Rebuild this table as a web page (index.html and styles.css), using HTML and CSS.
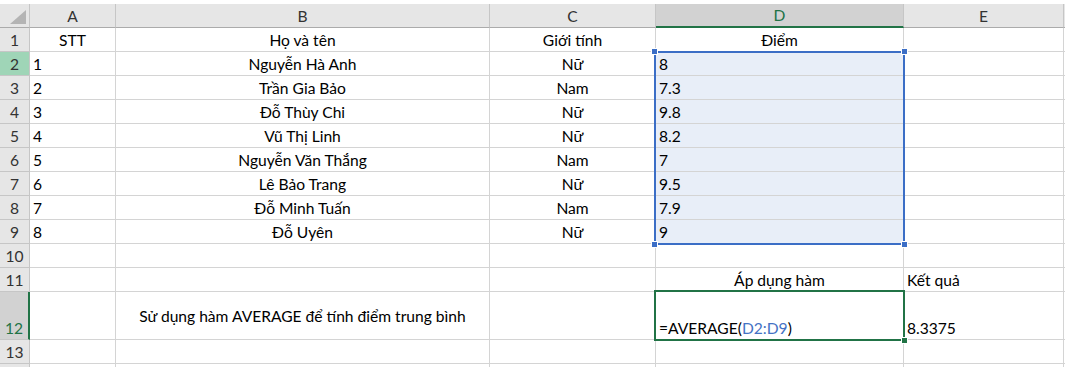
FILE: index.html
```html
<!DOCTYPE html>
<html lang="vi">
<head>
    <meta charset="UTF-8">
    <title>Bảng điểm</title>
    <link rel="stylesheet" href="styles.css">
</head>
<body>
    <div class="sheet">
        <div class="grid">
            <!-- Column headers -->
            <div class="corner">
                <svg width="16" height="14" viewBox="0 0 16 14"><polygon points="16,0 16,14 0,14" fill="#b4b4b4"/></svg>
            </div>
            <div class="col-head">A</div>
            <div class="col-head">B</div>
            <div class="col-head">C</div>
            <div class="col-head active">D</div>
            <div class="col-head">E</div>
            <div class="col-head"></div>

            <!-- Row 1 -->
            <div class="row-head">1</div>
            <div class="cell center">STT</div>
            <div class="cell center">Họ và tên</div>
            <div class="cell center">Giới tính</div>
            <div class="cell center">Điểm</div>
            <div class="cell"></div>
            <div class="cell"></div>

            <div class="row-head picked">2</div>
            <div class="cell">1</div>
            <div class="cell center">Nguyễn Hà Anh</div>
            <div class="cell center">Nữ</div>
            <div class="cell sel">8</div>
            <div class="cell"></div>
            <div class="cell"></div>

            <div class="row-head">3</div>
            <div class="cell">2</div>
            <div class="cell center">Trần Gia Bảo</div>
            <div class="cell center">Nam</div>
            <div class="cell sel">7.3</div>
            <div class="cell"></div>
            <div class="cell"></div>

            <div class="row-head">4</div>
            <div class="cell">3</div>
            <div class="cell center">Đỗ Thùy Chi</div>
            <div class="cell center">Nữ</div>
            <div class="cell sel">9.8</div>
            <div class="cell"></div>
            <div class="cell"></div>

            <div class="row-head">5</div>
            <div class="cell">4</div>
            <div class="cell center">Vũ Thị Linh</div>
            <div class="cell center">Nữ</div>
            <div class="cell sel">8.2</div>
            <div class="cell"></div>
            <div class="cell"></div>

            <div class="row-head">6</div>
            <div class="cell">5</div>
            <div class="cell center">Nguyễn Văn Thắng</div>
            <div class="cell center">Nam</div>
            <div class="cell sel">7</div>
            <div class="cell"></div>
            <div class="cell"></div>

            <div class="row-head">7</div>
            <div class="cell">6</div>
            <div class="cell center">Lê Bảo Trang</div>
            <div class="cell center">Nữ</div>
            <div class="cell sel">9.5</div>
            <div class="cell"></div>
            <div class="cell"></div>

            <div class="row-head">8</div>
            <div class="cell">7</div>
            <div class="cell center">Đỗ Minh Tuấn</div>
            <div class="cell center">Nam</div>
            <div class="cell sel">7.9</div>
            <div class="cell"></div>
            <div class="cell"></div>

            <div class="row-head">9</div>
            <div class="cell">8</div>
            <div class="cell center">Đỗ Uyên</div>
            <div class="cell center">Nữ</div>
            <div class="cell sel">9</div>
            <div class="cell"></div>
            <div class="cell"></div>

            <div class="row-head">10</div>
            <div class="cell"></div>
            <div class="cell"></div>
            <div class="cell"></div>
            <div class="cell"></div>
            <div class="cell"></div>
            <div class="cell"></div>

            <div class="row-head">11</div>
            <div class="cell"></div>
            <div class="cell"></div>
            <div class="cell"></div>
            <div class="cell center">Áp dụng hàm</div>
            <div class="cell">Kết quả</div>
            <div class="cell"></div>

            <!-- Tall row with the formula -->
            <div class="row-head tall active">12</div>
            <div class="cell tall"></div>
            <div class="cell tall center middle">Sử dụng hàm AVERAGE để tính điểm trung bình</div>
            <div class="cell tall"></div>
            <div class="cell tall">=AVERAGE(<span class="ref">D2:D9</span>)</div>
            <div class="cell tall">8.3375</div>
            <div class="cell tall"></div>

            <div class="row-head">13</div>
            <div class="cell"></div>
            <div class="cell"></div>
            <div class="cell"></div>
            <div class="cell"></div>
            <div class="cell"></div>
            <div class="cell"></div>

            <!-- Row 14, only its top edge is visible -->
            <div class="row-head"></div>
            <div class="cell"></div>
            <div class="cell"></div>
            <div class="cell"></div>
            <div class="cell"></div>
            <div class="cell"></div>
            <div class="cell"></div>
        </div>

        <!-- Selected range D2:D9 -->
        <div class="range">
            <span class="handle tl"></span>
            <span class="handle tr"></span>
            <span class="handle bl"></span>
            <span class="handle br"></span>
        </div>

        <!-- Active cell D12 -->
        <div class="active-cell">
            <span class="fill-handle"></span>
        </div>
    </div>
</body>
</html>
```

FILE: styles.css
```css
body {
    margin: 0;
    background: #fff;
    font-family: Lato, "Liberation Sans", sans-serif;
    font-size: 15.6px;
    color: #000;
    overflow: hidden;
}

.sheet {
    position: relative;
    padding-top: 4px;
}

.grid {
    display: grid;
    grid-template-columns: 30px 86px 374px 166px 248px 160px 1fr;
    grid-auto-rows: 24px;
}

.corner,
.col-head,
.row-head,
.cell {
    box-sizing: border-box;
    display: flex;
    align-items: flex-end;
    white-space: nowrap;
    overflow: hidden;
}

.corner {
    background: #e6e6e6;
    border-right: 1px solid #c6c6c6;
    border-bottom: 1px solid #ababab;
    justify-content: flex-end;
    padding: 0 3px 3px 0;
}

.col-head {
    background: #e6e6e6;
    border-right: 1px solid #c6c6c6;
    border-bottom: 1px solid #ababab;
    justify-content: center;
    color: #333;
    padding-bottom: 2px;
}

.col-head.active {
    background: #d2d2d2;
    color: #217346;
    border-bottom: 2px solid #217346;
}

.row-head {
    background: #e6e6e6;
    border-right: 1px solid #c6c6c6;
    border-bottom: 1px solid #c6c6c6;
    justify-content: center;
    color: #333;
    padding-bottom: 2px;
}

.row-head.picked {
    background: #9fd5b7;
}

.row-head.active {
    background: #d2d2d2;
    color: #217346;
    border-right: 2px solid #217346;
}

.cell {
    border-right: 1px solid #d4d4d4;
    border-bottom: 1px solid #d4d4d4;
    padding: 0 3px 2px;
}

.cell.center {
    justify-content: center;
}

.cell.middle {
    align-items: center;
    padding-bottom: 0;
}

.cell.sel {
    background: #e8eef8;
}

.tall {
    grid-row: span 2;
}

.ref {
    color: #4472c4;
}

.range {
    position: absolute;
    left: 654px;
    top: 51px;
    width: 251px;
    height: 194px;
    box-sizing: border-box;
    border: 2px solid #3b6ec6;
}

.handle {
    position: absolute;
    width: 5px;
    height: 5px;
    background: #3b6ec6;
    border: 1px solid #fff;
}

.handle.tl { left: -5px; top: -5px; }
.handle.tr { right: -5px; top: -5px; }
.handle.bl { left: -5px; bottom: -5px; }
.handle.br { right: -5px; bottom: -5px; }

.active-cell {
    position: absolute;
    left: 654px;
    top: 290px;
    width: 251px;
    height: 51px;
    box-sizing: border-box;
    border: 2px solid #217346;
}

.fill-handle {
    position: absolute;
    right: -5px;
    bottom: -5px;
    width: 5px;
    height: 5px;
    background: #217346;
    border: 1px solid #fff;
}
```
